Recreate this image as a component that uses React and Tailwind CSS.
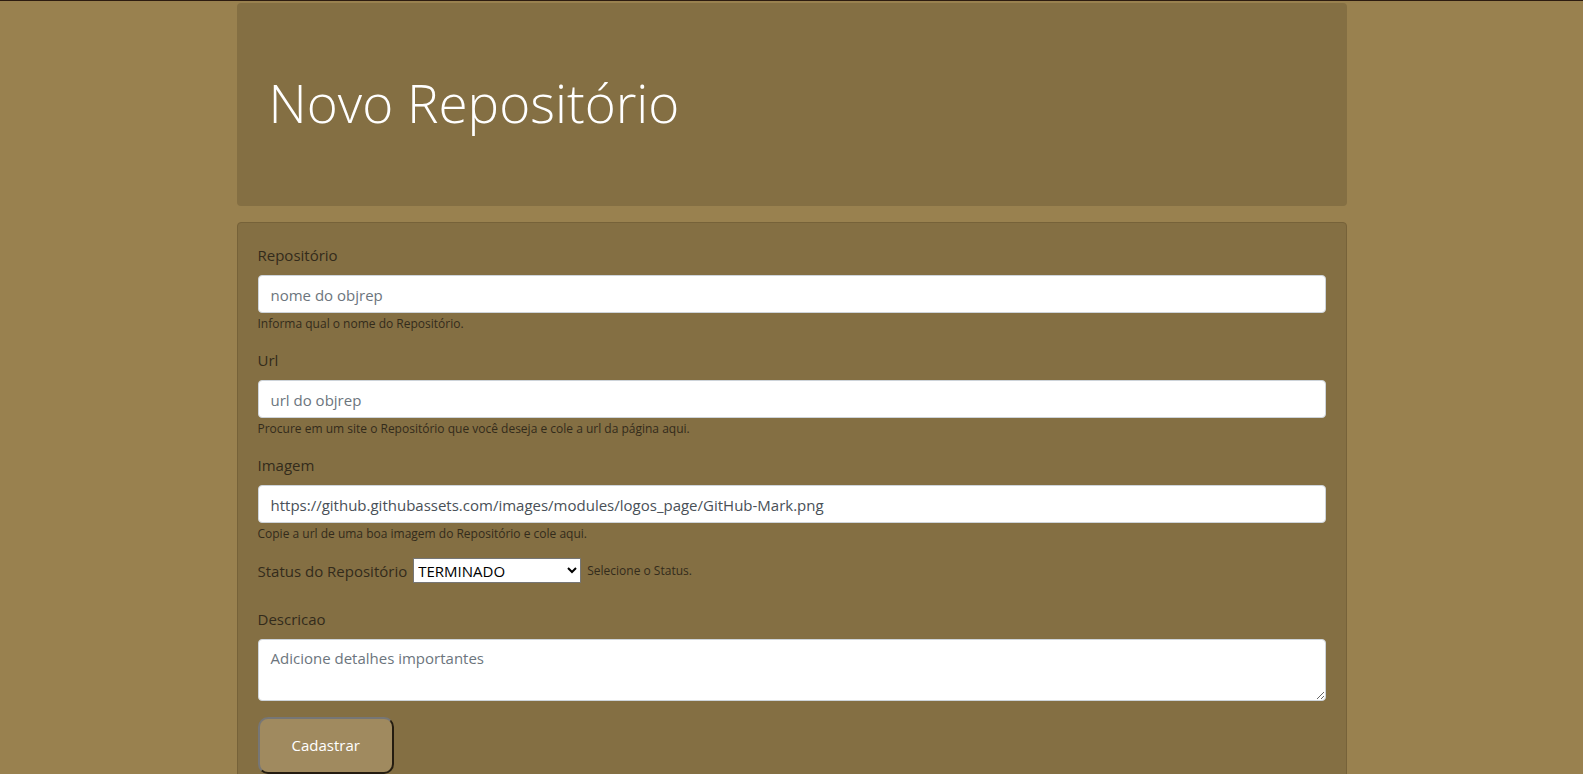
function Field({ id, label, help, placeholder, defaultValue }) {
  return (
    <div className="mb-[14px]">
      <label htmlFor={id} className="mb-2 block leading-6">{label}</label>
      <input
        id={id}
        type="text"
        placeholder={placeholder}
        defaultValue={defaultValue}
        className="block h-[38px] w-full rounded border border-[#ced4da] bg-white px-3 pt-0.5 text-[#495057] placeholder:text-[#6c757d]"
      />
      <small className="block text-[12px] leading-[21px]">{help}</small>
    </div>
  );
}

export default function App() {
  return (
    <div className="min-h-screen border-t border-[#2d1c10] bg-[#99814f] pt-0.5 font-['Open_Sans','Noto_Sans',sans-serif] text-[15px] text-[#332b1b]">
      <main className="mx-auto max-w-[1140px] px-[15px]">
        <header className="mb-4 rounded bg-[#846f43] px-8 pt-[66px] pb-[70px]">
          <h1 className="text-[53px] leading-[67px] font-light text-white">Novo Repositório</h1>
        </header>

        <form className="rounded border border-[#766239] bg-[#846f43] p-5" onSubmit={(e) => e.preventDefault()}>
          <Field
            id="name"
            label="Repositório"
            placeholder="nome do objrep"
            help="Informa qual o nome do Repositório."
          />
          <Field
            id="url"
            label="Url"
            placeholder="url do objrep"
            help="Procure em um site o Repositório que você deseja e cole a url da página aqui."
          />
          <Field
            id="image"
            label="Imagem"
            defaultValue="https://github.githubassets.com/images/modules/logos_page/GitHub-Mark.png"
            help="Copie a url de uma boa imagem do Repositório e cole aqui."
          />

          <div className="mb-6 flex items-center gap-1.5">
            <label htmlFor="status" className="leading-6">Status do Repositório</label>
            <select id="status" defaultValue="TERMINADO" className="h-[25px] w-[168px] border border-[#767676] bg-white text-black">
              <option>TERMINADO</option>
              <option>EM ANDAMENTO</option>
            </select>
            <small className="text-[12px] leading-[21px]">Selecione o Status.</small>
          </div>

          <div className="mb-4">
            <label htmlFor="description" className="mb-2 block leading-6">Descricao</label>
            <textarea
              id="description"
              rows={2}
              placeholder="Adicione detalhes importantes"
              className="block h-[62px] w-full resize rounded border border-[#ced4da] bg-white px-3 py-1.5 leading-6 text-[#495057] placeholder:text-[#6c757d]"
            />
          </div>

          <button type="submit" className="rounded-[10px] border-2 border-t-[#767676] border-l-[#767676] border-r-[#241c10] border-b-[#241c10] bg-[#a08a5f] px-8 py-4 leading-[21px] text-white">
            Cadastrar
          </button>
        </form>
      </main>
    </div>
  );
}
